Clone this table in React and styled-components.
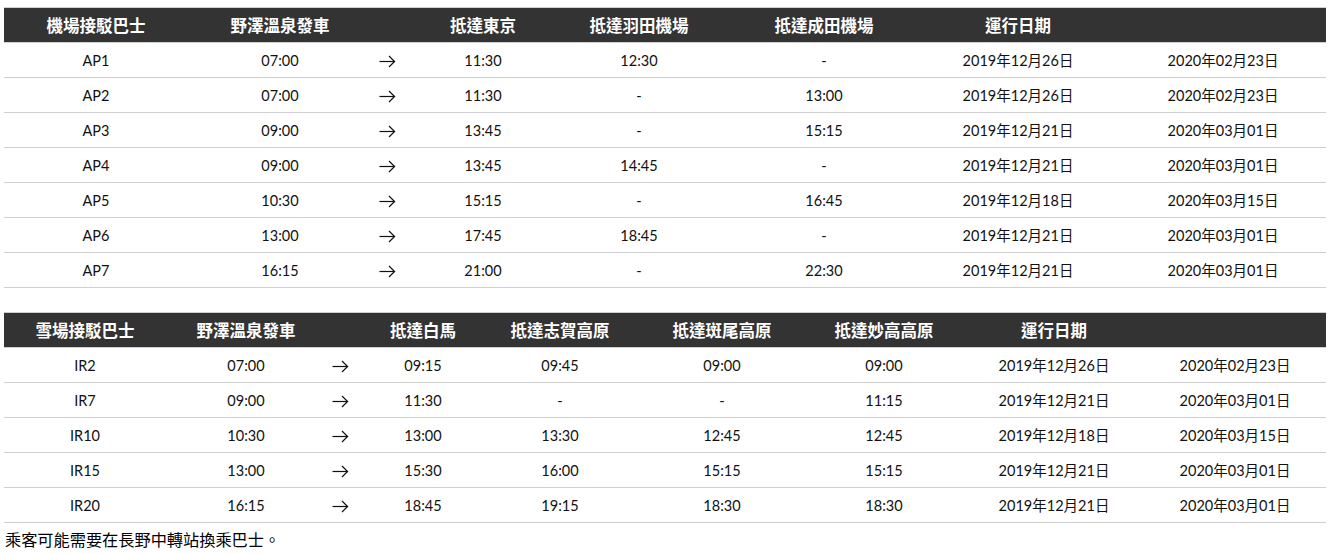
import React from "react";
import styled, { createGlobalStyle } from "styled-components";

const Global = createGlobalStyle`
  html, body { margin: 0; padding: 0; background: #fff; }
  body {
    font-family: Lato, "Noto Sans CJK TC", sans-serif;
    color: #111;
  }
`;

const Page = styled.div`
  padding: 7px 10px 0 4px;
  width: 1322px;
  display: flex;
  flex-direction: column;
`;

const Table = styled.div`
  display: flex;
  flex-direction: column;
  border-top: 1px solid #cfcfcf;
  & + & { margin-top: 24px; }
`;

const Row = styled.div`
  display: grid;
  grid-template-columns: ${(p) => p.$cols};
  height: 34px;
  align-items: center;
  border-bottom: 1px solid #cfcfcf;
  background: ${(p) => (p.$head ? "#333333" : "#fff")};
`;

const HeadCell = styled.div`
  text-align: center;
  color: #fff;
  font-family: "Noto Sans CJK TC", sans-serif;
  font-weight: 700;
  font-size: 16.5px;
  padding-left: ${(p) => p.$shift || 0}px;
  white-space: nowrap;
`;

const Cell = styled.div`
  text-align: center;
  font-size: 14.5px;
  line-height: 20px;
  padding-top: 2px;
  padding-left: ${(p) => p.$shift || 0}px;
  white-space: nowrap;
  display: flex;
  justify-content: center;
`;

const Note = styled.p`
  margin: 4px 0 0 1px;
  font-family: "Noto Sans CJK TC", sans-serif;
  font-size: 16.2px;
  line-height: 24px;
  color: #000;
`;

const Arrow = () => (
  <svg width="17" height="13" viewBox="0 0 17 13" fill="none">
    <path d="M0.5 6.5H15.5" stroke="#111" strokeWidth="1.2" />
    <path d="M10 1L15.6 6.5L10 12" stroke="#111" strokeWidth="1.2" />
  </svg>
);

const airportCols = "184px 184px 30px 162px 150px 220px 168px 1fr";
const airportHead = ["機場接駁巴士", "野澤溫泉發車", "", "抵達東京", "抵達羽田機場", "抵達成田機場", "運行日期", ""];
const airportRows = [
  ["AP1", "07:00", "11:30", "12:30", "-", "2019年12月26日", "2020年02月23日"],
  ["AP2", "07:00", "11:30", "-", "13:00", "2019年12月26日", "2020年02月23日"],
  ["AP3", "09:00", "13:45", "-", "15:15", "2019年12月21日", "2020年03月01日"],
  ["AP4", "09:00", "13:45", "14:45", "-", "2019年12月21日", "2020年03月01日"],
  ["AP5", "10:30", "15:15", "-", "16:45", "2019年12月18日", "2020年03月15日"],
  ["AP6", "13:00", "17:45", "18:45", "-", "2019年12月21日", "2020年03月01日"],
  ["AP7", "16:15", "21:00", "-", "22:30", "2019年12月21日", "2020年03月01日"],
];

const snowCols = "162px 160px 28px 138px 136px 188px 136px 204px 158px";
const snowHead = ["雪場接駁巴士", "野澤溫泉發車", "", "抵達白馬", "抵達志賀高原", "抵達斑尾高原", "抵達妙高高原", "運行日期", ""];
const snowRows = [
  ["IR2", "07:00", "09:15", "09:45", "09:00", "09:00", "2019年12月26日", "2020年02月23日"],
  ["IR7", "09:00", "11:30", "-", "-", "11:15", "2019年12月21日", "2020年03月01日"],
  ["IR10", "10:30", "13:00", "13:30", "12:45", "12:45", "2019年12月18日", "2020年03月15日"],
  ["IR15", "13:00", "15:30", "16:00", "15:15", "15:15", "2019年12月21日", "2020年03月01日"],
  ["IR20", "16:15", "18:45", "19:15", "18:30", "18:30", "2019年12月21日", "2020年03月01日"],
];

const Schedule = ({ cols, head, rows, lastShift }) => (
  <Table>
    <Row $head $cols={cols}>
      {head.map((h, i) => (
        <HeadCell key={i} $shift={i === head.length - 1 ? lastShift : 0}>
          {h}
        </HeadCell>
      ))}
    </Row>
    {rows.map((r) => {
      const cells = [r[0], r[1], null, ...r.slice(2)];
      return (
        <Row key={r[0]} $cols={cols}>
          {cells.map((c, i) => (
            <Cell key={i} $shift={i === cells.length - 1 ? lastShift : 0}>
              {c === null ? <Arrow /> : c}
            </Cell>
          ))}
        </Row>
      );
    })}
  </Table>
);

export default function App() {
  return (
    <>
      <Global />
      <Page>
        <Schedule cols={airportCols} head={airportHead} rows={airportRows} lastShift={18} />
        <Schedule cols={snowCols} head={snowHead} rows={snowRows} lastShift={0} />
        <Note>乘客可能需要在長野中轉站換乘巴士。</Note>
      </Page>
    </>
  );
}
